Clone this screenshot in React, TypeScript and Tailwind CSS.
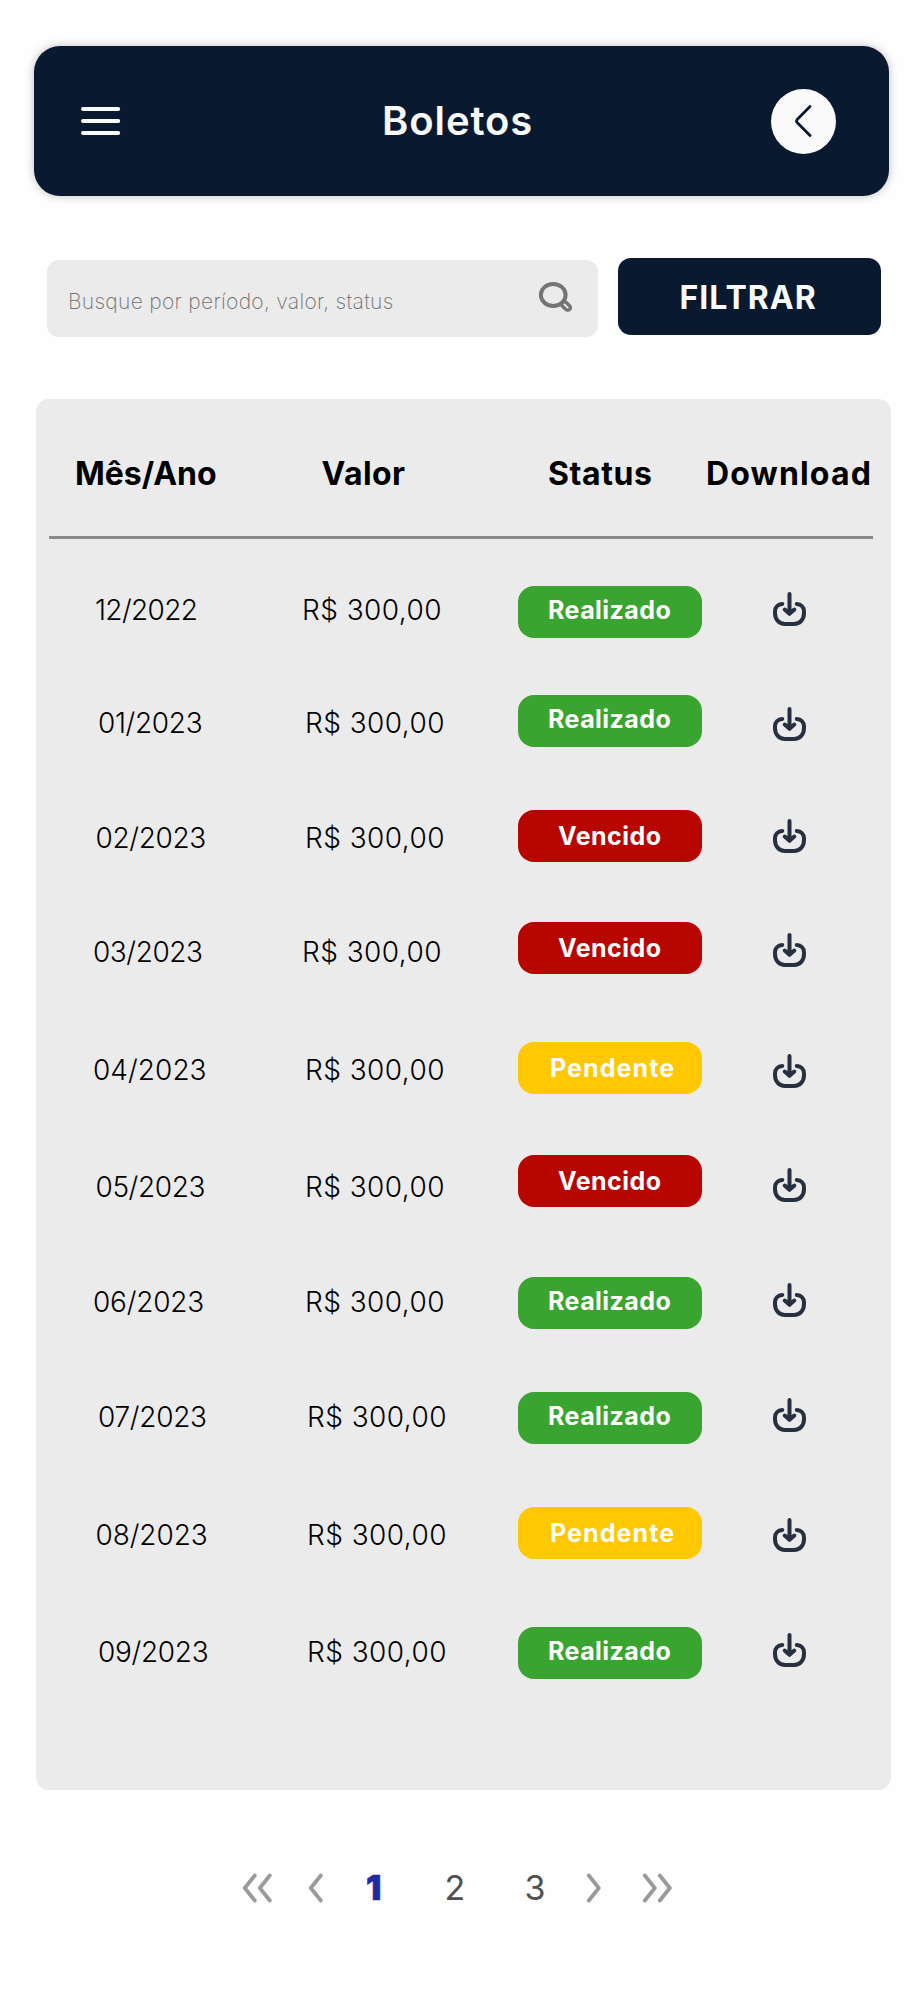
import React from "react";

type Status = "Realizado" | "Vencido" | "Pendente";

interface Boleto {
  mesAno: string;
  valor: string;
  status: Status;
  row: string;
  date: string;
  price: string;
  icon: string;
}

const VALOR = "R$ 300,00";

const boletos: Boleto[] = [
  { mesAno: "12/2022", valor: VALOR, status: "Realizado", row: "h-[109px]", date: "pt-[8.5px] pl-[2px] tracking-[-0.65px]", price: "pt-[8.5px]", icon: "pt-[6px]" },
  { mesAno: "01/2023", valor: VALOR, status: "Realizado", row: "h-[115px]", date: "pt-[12px] pl-[5px] tracking-[-0.35px]", price: "pt-[12px] pl-[3px]", icon: "pt-[12px]" },
  { mesAno: "02/2023", valor: VALOR, status: "Vencido", row: "h-[112px]", date: "pt-[12px] pl-[2.5px] tracking-[-0.35px]", price: "pt-[12px] pl-[3px]", icon: "pt-[9px]" },
  { mesAno: "03/2023", valor: VALOR, status: "Vencido", row: "h-[120px]", date: "pt-[14.5px] tracking-[-0.45px]", price: "pt-[14.5px]", icon: "pt-[11.5px]" },
  { mesAno: "04/2023", valor: VALOR, status: "Pendente", row: "h-[113px]", date: "pt-[12px] tracking-[0.05px]", price: "pt-[12px] pl-[3px]", icon: "pt-[12px]" },
  { mesAno: "05/2023", valor: VALOR, status: "Vencido", row: "h-[122px]", date: "pt-[16.5px] pl-[2.5px] tracking-[-0.4px]", price: "pt-[16.5px] pl-[3px]", icon: "pt-[13.5px]" },
  { mesAno: "06/2023", valor: VALOR, status: "Realizado", row: "h-[115px]", date: "pt-[9.5px] tracking-[-0.2px]", price: "pt-[9.5px] pl-[3px]", icon: "pt-[6px]" },
  { mesAno: "07/2023", valor: VALOR, status: "Realizado", row: "h-[115px]", date: "pt-[9.5px] pl-[5px] tracking-[-0.3px]", price: "pt-[9.5px] pl-[5px]", icon: "pt-[6px]" },
  { mesAno: "08/2023", valor: VALOR, status: "Pendente", row: "h-[120px]", date: "pt-[12px] pl-[2.5px] tracking-[-0.1px]", price: "pt-[12px] pl-[5px]", icon: "pt-[11px]" },
  { mesAno: "09/2023", valor: VALOR, status: "Realizado", row: "h-[52px]", date: "pt-[9.5px] pl-[5px] tracking-[-0.3px]", price: "pt-[9.5px] pl-[5px]", icon: "pt-[6px]" },
];

const badgeStyles: Record<Status, string> = {
  Realizado: "bg-[#39a42f] pt-[10px] pl-[30.5px] tracking-[0.45px]",
  Vencido: "bg-[#b70600] pt-[12px] pl-[40.5px] tracking-[0.5px]",
  Pendente: "bg-[#ffc800] pt-[12px] pl-[32.5px] tracking-[1.1px]",
};

function MenuIcon() {
  return (
    <svg width="40" height="30" viewBox="0 0 40 30" stroke="#fafafa" strokeWidth="4" strokeLinecap="round">
      <path d="M2 3H37.2M2 15H37.2M2 27H37.2" />
    </svg>
  );
}

function SearchIcon() {
  return (
    <svg width="36" height="32" viewBox="0 0 36 32" fill="none" stroke="#747474" strokeLinecap="round">
      <ellipse cx="14.2" cy="13.9" rx="12.4" ry="11" strokeWidth="4" />
      <rect x="-5" y="-2.6" width="10" height="5.2" rx="2.6" strokeWidth="3.4" transform="translate(27 24.9) rotate(43)" />
    </svg>
  );
}

function DownloadIcon() {
  return (
    <svg width="33" height="35" viewBox="0 0 33 35" fill="none" stroke="#273040" strokeWidth="4" strokeLinecap="round" strokeLinejoin="round">
      <path d="M9.3 12C5 12.3 2 15 2 19.5V21C2 27.5 6 32 12 32H21C27 32 31 27.5 31 21V19.5C31 15 28 12.3 23.7 12" />
      <path d="M16.5 2V21.5M11.7 17.5L16.5 21.8L21.3 17.5" />
    </svg>
  );
}

function Chevron({ dir }: { dir: "left" | "right" }) {
  return (
    <svg width="15" height="30" viewBox="0 0 15 30" fill="none" stroke="#9a9a9a" strokeWidth="3.8" strokeLinecap="round" strokeLinejoin="round">
      <path d={dir === "left" ? "M12.8 2.5L2.8 15L12.8 27.5" : "M2.8 2.5L12.8 15L2.8 27.5"} />
    </svg>
  );
}

export default function App() {
  return (
    <div className="h-[2000px] w-[924px] overflow-hidden bg-[#fefefe] pt-[46px] font-['Inter',sans-serif] text-black">
      <header className="ml-[33.5px] flex h-[149.5px] w-[855px] items-start rounded-[26px] bg-[#091930] shadow-[0_0_10px_rgba(0,0,0,0.25)]">
        <button className="mt-[60px] ml-[47px]" aria-label="Menu">
          <MenuIcon />
        </button>
        <h1 className="mt-[53px] ml-[261.5px] w-[385.5px] text-[40px] leading-[44px] font-semibold tracking-[0.9px] text-[#fafafa]">Boletos</h1>
        <button className="mt-[42.5px] ml-[3.5px] flex size-[65px] items-center justify-center rounded-full bg-[#fafafa]" aria-label="Voltar">
          <svg width="20" height="34" viewBox="0 0 20 34" fill="none" stroke="#091930" strokeWidth="2.8" strokeLinecap="round" strokeLinejoin="round">
            <path d="M16 2.5L3.4 15.2Q1.7 17 3.4 18.8L16 31.5" />
          </svg>
        </button>
      </header>

      <div className="mt-[62px] ml-[46.5px] flex items-start">
        <div className="mt-[2.5px] flex h-[77px] w-[551px] items-start rounded-[12px] bg-[#ebebeb] pl-[21.5px]">
          <span className="mt-[30px] w-[470.5px] text-[21px] leading-6 font-extralight tracking-[0.3px] text-[#707070]">Busque por período, valor, status</span>
          <span className="mt-[21px]">
            <SearchIcon />
          </span>
        </div>
        <button className="ml-[20.5px] flex h-[77.5px] w-[262.5px] items-start rounded-[13px] bg-[#091930] pt-[22px] pl-[61.5px] text-[32px] leading-9 font-bold tracking-[1px] text-[#fafafa]">FILTRAR</button>
      </div>

      <main className="mt-[61.5px] ml-[36px] h-[1391px] w-[855px] rounded-[13px] bg-[#ebebeb] pt-[57px]">
        <div className="flex text-[32px] leading-9 font-bold">
          <span className="ml-[39px] w-[246.5px] tracking-[-0.05px]">Mês/Ano</span>
          <span className="w-[226.5px] tracking-[0.4px]">Valor</span>
          <span className="w-[158px] tracking-[0.6px]">Status</span>
          <span className="tracking-[1.15px]">Download</span>
        </div>
        <hr className="mt-[44px] ml-[13px] h-[3px] w-[824px] border-0 bg-[#8a8a8a]" />
        <div className="mt-[47px] ml-[57px]">
          {boletos.map((b) => (
            <div key={b.mesAno} className={`grid grid-cols-[209px_215.5px_255.5px_33px] items-start text-[28px] leading-8 font-light ${b.row}`}>
              <span className={b.date}>{b.mesAno}</span>
              <span className={`tracking-[0.45px] ${b.price}`}>{b.valor}</span>
              <span className={`h-[52.5px] w-[184px] rounded-[16px] text-[25px] leading-7 font-bold text-[#fdfdfd] ${badgeStyles[b.status]}`}>{b.status}</span>
              <button className={b.icon} aria-label="Download">
                <DownloadIcon />
              </button>
            </div>
          ))}
        </div>
      </main>

      <nav className="mt-[78px] ml-[242px] flex h-10 items-center text-[34px] leading-10 text-[#505050]">
        <span className="flex w-[66px]">
          <Chevron dir="left" />
          <Chevron dir="left" />
        </span>
        <span className="w-[58px]">
          <Chevron dir="left" />
        </span>
        <span className="w-[78.5px] font-black text-[#1f2aa3] [-webkit-text-stroke:0.6px_#1f2aa3]">1</span>
        <span className="w-[80px]">2</span>
        <span className="w-[61.5px]">3</span>
        <span className="w-[56px]">
          <Chevron dir="right" />
        </span>
        <span className="flex">
          <Chevron dir="right" />
          <Chevron dir="right" />
        </span>
      </nav>
    </div>
  );
}
